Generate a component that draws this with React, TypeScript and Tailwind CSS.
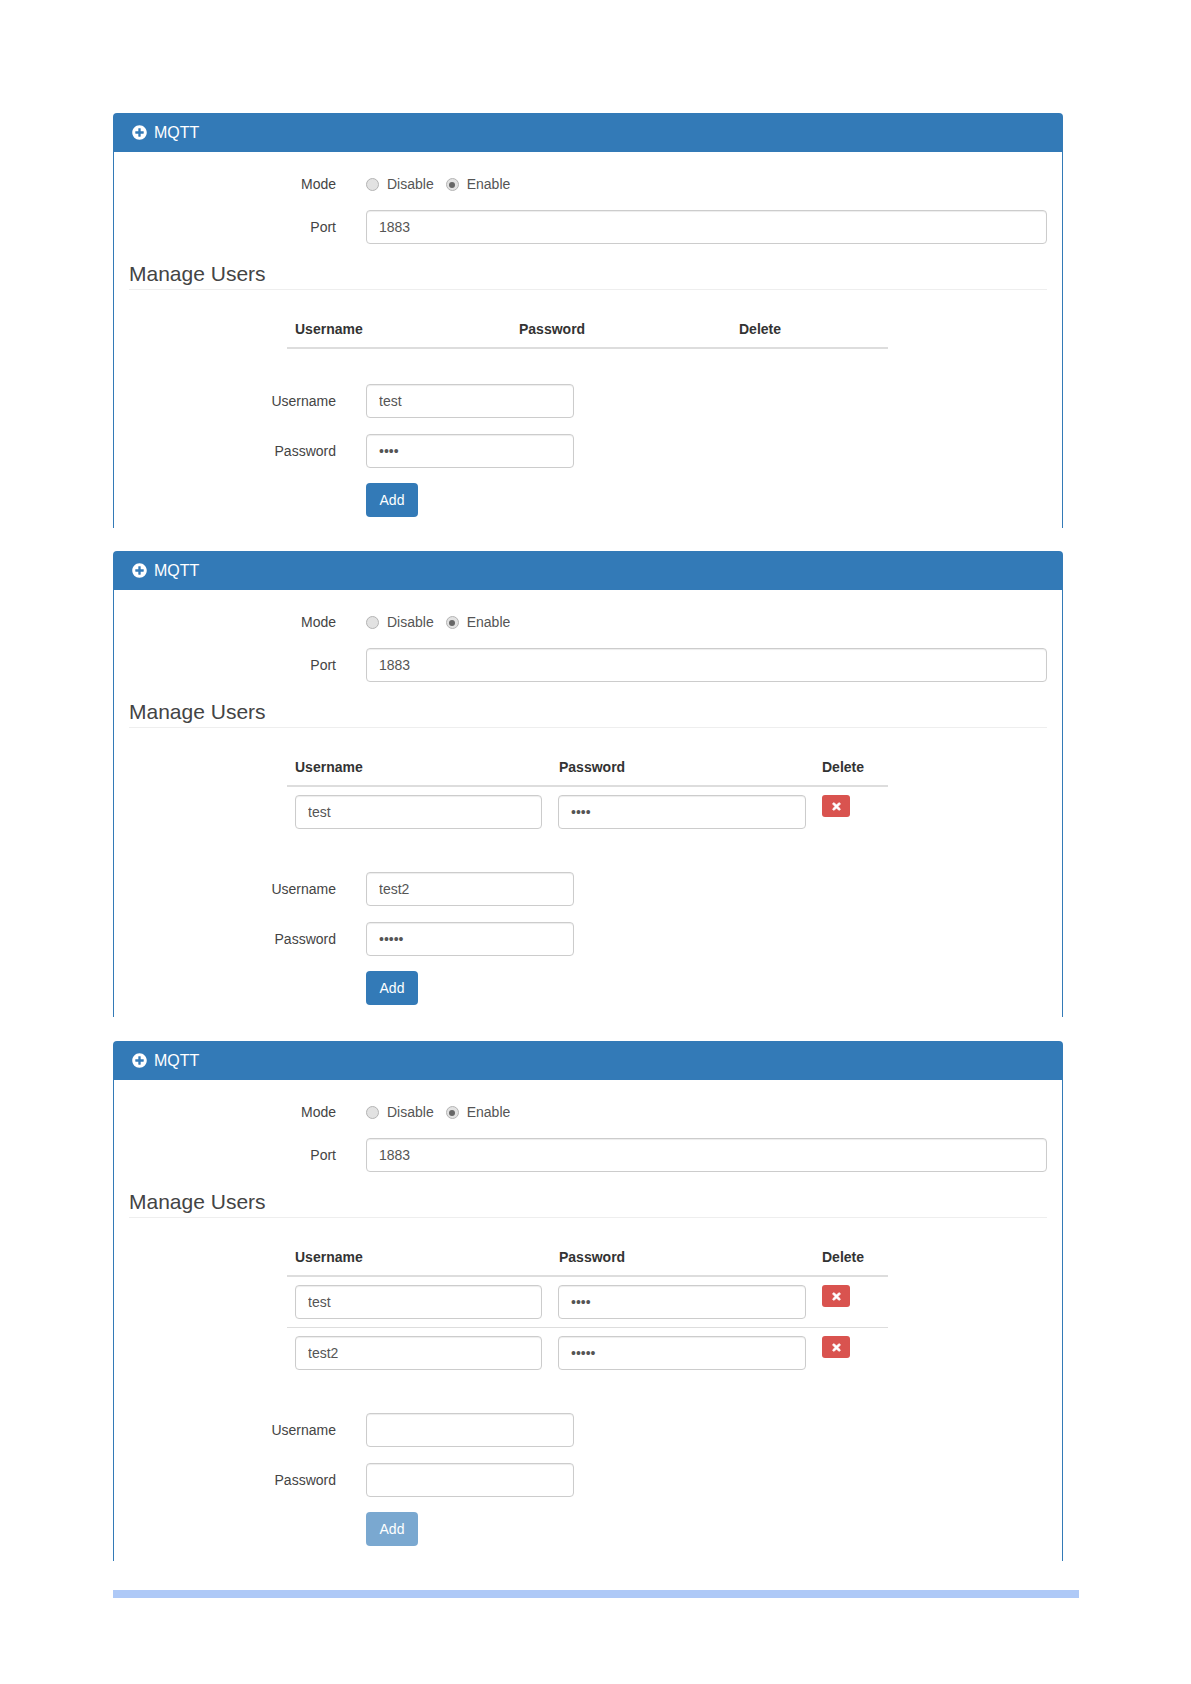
import { FaPlusCircle, FaTimes } from "react-icons/fa";

type User = { name: string; pass: string };
type PanelProps = {
  users: User[];
  formName: string;
  formPass: string;
  disabled?: boolean;
  className?: string;
  bodyClass?: string;
};

const inputClass =
  "h-[34px] rounded border border-[#ccc] bg-white px-3 text-[14px] text-[#555] shadow-[inset_0_1px_1px_rgba(0,0,0,0.075)] outline-none";

function Radio({ checked, label }: { checked?: boolean; label: string }) {
  return (
    <label className="flex items-center">
      <span className="flex h-[13px] w-[13px] items-center justify-center rounded-full border border-[#b4b4b4] bg-[#e2e2e2]">
        {checked && <span className="h-[6px] w-[6px] rounded-full bg-[#666]" />}
      </span>
      <span className="ml-2 text-[#555]">{label}</span>
    </label>
  );
}

function FormRow({ label, children }: { label: string; children: React.ReactNode }) {
  return (
    <div className="flex items-center gap-[30px]">
      <div className="w-[207px] text-right text-[#444]">{label}</div>
      {children}
    </div>
  );
}

function Panel({ users, formName, formPass, disabled, className, bodyClass }: PanelProps) {
  const hasUsers = users.length > 0;
  return (
    <div className={`w-[950px] ${className ?? ""}`}>
      <div className="flex h-[39px] items-center rounded-t bg-[#337ab7] pl-[19px] text-[16px] text-white">
        <FaPlusCircle className="h-[15px] w-[15px]" />
        <span className="ml-[7px]">MQTT</span>
      </div>
      <div className={`border-x border-[#337ab7] px-[15px] pt-[22px] ${bodyClass ?? ""}`}>
        <FormRow label="Mode">
          <div className="flex h-[20px] items-center gap-3">
            <Radio label="Disable" />
            <Radio label="Enable" checked />
          </div>
        </FormRow>
        <div className="mt-[15px]">
          <FormRow label="Port">
            <input readOnly value="1883" className={`${inputClass} w-[681px]`} />
          </FormRow>
        </div>
        <h3 className="mt-[14px] h-[32px] border-b border-[#eee] text-[21px] leading-[32px] text-[#444]">
          Manage Users
        </h3>
        <div className="ml-[158px] mt-[20px] w-[601px]">
          <div className="flex h-[39px] border-b-2 border-[#ddd] font-bold leading-[38px] text-[#333]">
            <div className={`${hasUsers ? "w-[264px]" : "w-[224px]"} px-2`}>Username</div>
            <div className={`${hasUsers ? "w-[263px]" : "w-[220px]"} px-2`}>Password</div>
            <div className="px-2">Delete</div>
          </div>
          {users.map((u, i) => (
            <div
              key={u.name}
              className={`flex items-start px-2 py-2 ${i > 0 ? "border-t border-[#ddd]" : ""}`}
            >
              <input readOnly value={u.name} className={`${inputClass} w-[247px]`} />
              <input readOnly type="password" value={u.pass} className={`${inputClass} ml-4 w-[248px]`} />
              <button className="ml-4 flex h-[22px] w-[28px] items-center justify-center rounded-[3px] bg-[#d9534f] text-white">
                <FaTimes className="h-[11px] w-[11px] stroke-[40]" />
              </button>
            </div>
          ))}
        </div>
        <div className="mt-[35px]">
          <FormRow label="Username">
            <input readOnly value={formName} className={`${inputClass} w-[208px]`} />
          </FormRow>
          <div className="mt-4">
            <FormRow label="Password">
              <input readOnly type="password" value={formPass} className={`${inputClass} w-[208px]`} />
            </FormRow>
          </div>
          <div className="mt-[15px] pl-[237px]">
            <button
              className={`h-[34px] w-[52px] rounded text-white ${disabled ? "bg-[#337ab7]/65" : "bg-[#337ab7]"}`}
            >
              Add
            </button>
          </div>
        </div>
      </div>
    </div>
  );
}

export default function App() {
  return (
    <div className="min-h-[1684px] bg-white pl-[113px] pt-[113px] font-['Liberation_Sans',Arial,sans-serif] text-[14px]">
      <Panel users={[]} formName="test" formPass="test" className="mb-[23px]" bodyClass="pb-[11px]" />
      <Panel
        users={[{ name: "test", pass: "test" }]}
        formName="test2"
        formPass="test2"
        className="mb-6"
        bodyClass="pb-3"
      />
      <Panel
        users={[
          { name: "test", pass: "test" },
          { name: "test2", pass: "test2" },
        ]}
        formName=""
        formPass=""
        disabled
        bodyClass="pb-[15px]"
      />
      <div className="mt-[29px] h-2 w-[966px] bg-[#aec9f7]" />
    </div>
  );
}
